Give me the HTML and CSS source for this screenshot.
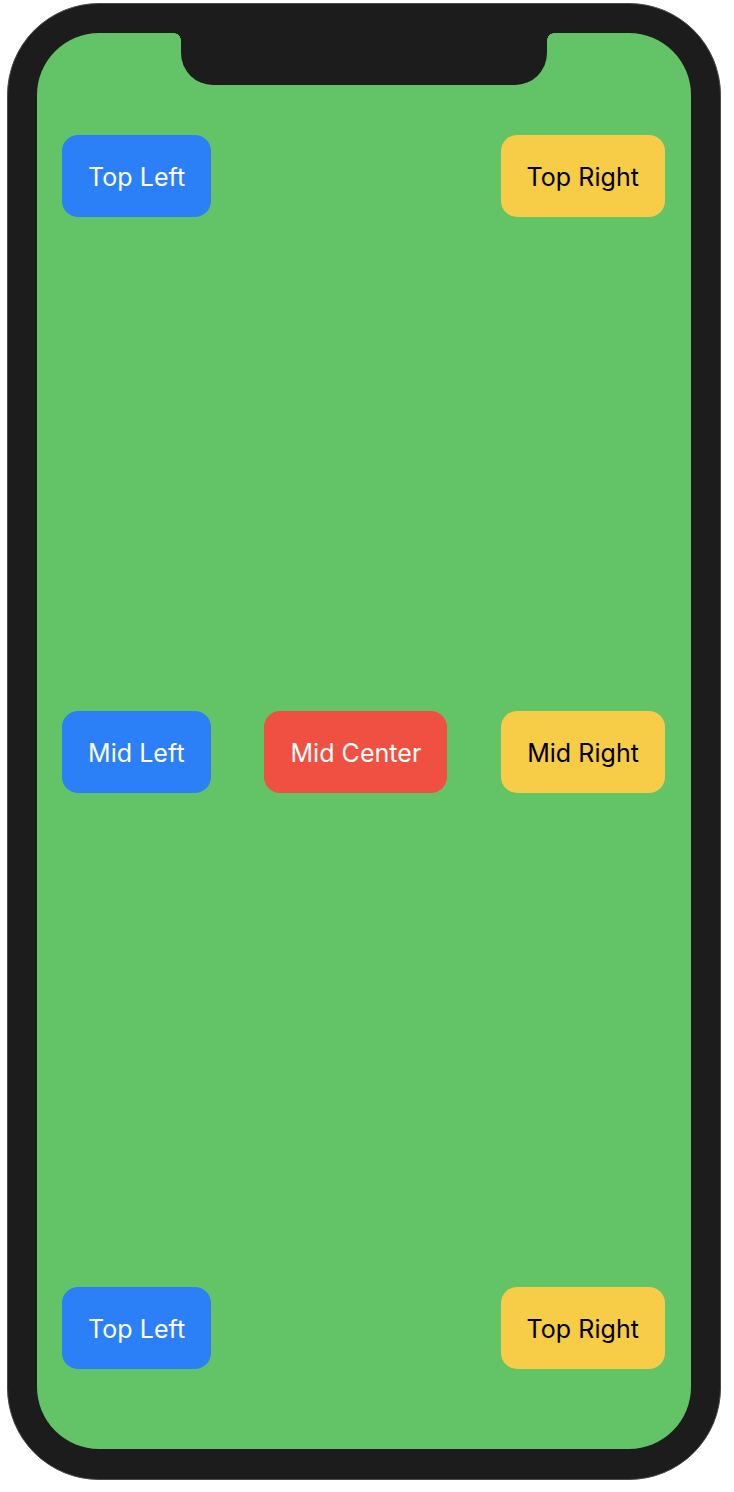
FILE: index.html
```html
<!DOCTYPE html>
<html>
<head>
<meta charset="utf-8">
<link rel="stylesheet" href="styles.css">
</head>
<body>
<div class="phone">
  <div class="screen">
    <div class="notch"></div>
    <div class="row">
      <div class="btn blue">Top Left</div>
      <div class="btn yellow">Top Right</div>
    </div>
    <div class="row">
      <div class="btn blue">Mid Left</div>
      <div class="btn red">Mid Center</div>
      <div class="btn yellow">Mid Right</div>
    </div>
    <div class="row">
      <div class="btn blue">Top Left</div>
      <div class="btn yellow">Top Right</div>
    </div>
  </div>
</div>
</body>
</html>
```
FILE: styles.css
```css
html, body {
  margin: 0;
  padding: 0;
  background: #ffffff;
}
body {
  font-family: Inter, "Noto Sans", "Liberation Sans", sans-serif;
}
.phone {
  box-sizing: border-box;
  margin: 3px 0 0 7px;
  width: 714px;
  height: 1477px;
  padding: 29px 29px 29px 29px;
  background: #1c1c1c;
  border: 1px solid #4a4a4a;
  border-radius: 92px;
}
.screen {
  position: relative;
  box-sizing: border-box;
  width: 654px;
  height: 1416px;
  background: #63c467;
  border-radius: 62px;
  padding: 102px 26px 80px 25px;
  display: flex;
  flex-direction: column;
  justify-content: space-between;
}
.notch {
  position: absolute;
  top: 0;
  left: 144px;
  width: 366px;
  height: 52px;
  background: #1c1c1c;
  border-radius: 0 0 32px 32px;
}
.notch::before,
.notch::after {
  content: "";
  position: absolute;
  top: 0;
  width: 7px;
  height: 7px;
}
.notch::before {
  left: -7px;
  background: radial-gradient(circle at 0 100%, transparent 6.5px, #1c1c1c 7px);
}
.notch::after {
  right: -7px;
  background: radial-gradient(circle at 100% 100%, transparent 6.5px, #1c1c1c 7px);
}
.row {
  display: flex;
  justify-content: space-between;
  align-items: center;
}
.btn {
  height: 82px;
  padding: 1px 26px 0;
  box-sizing: border-box;
  border-radius: 16px;
  display: flex;
  align-items: center;
  font-size: 25px;
  letter-spacing: 0.05px;
}
.blue {
  background: #2b80f7;
  color: #ffffff;
}
.red {
  background: #ef5041;
  color: #ffffff;
}
.yellow {
  background: #f7cc46;
  color: #000000;
}
```
